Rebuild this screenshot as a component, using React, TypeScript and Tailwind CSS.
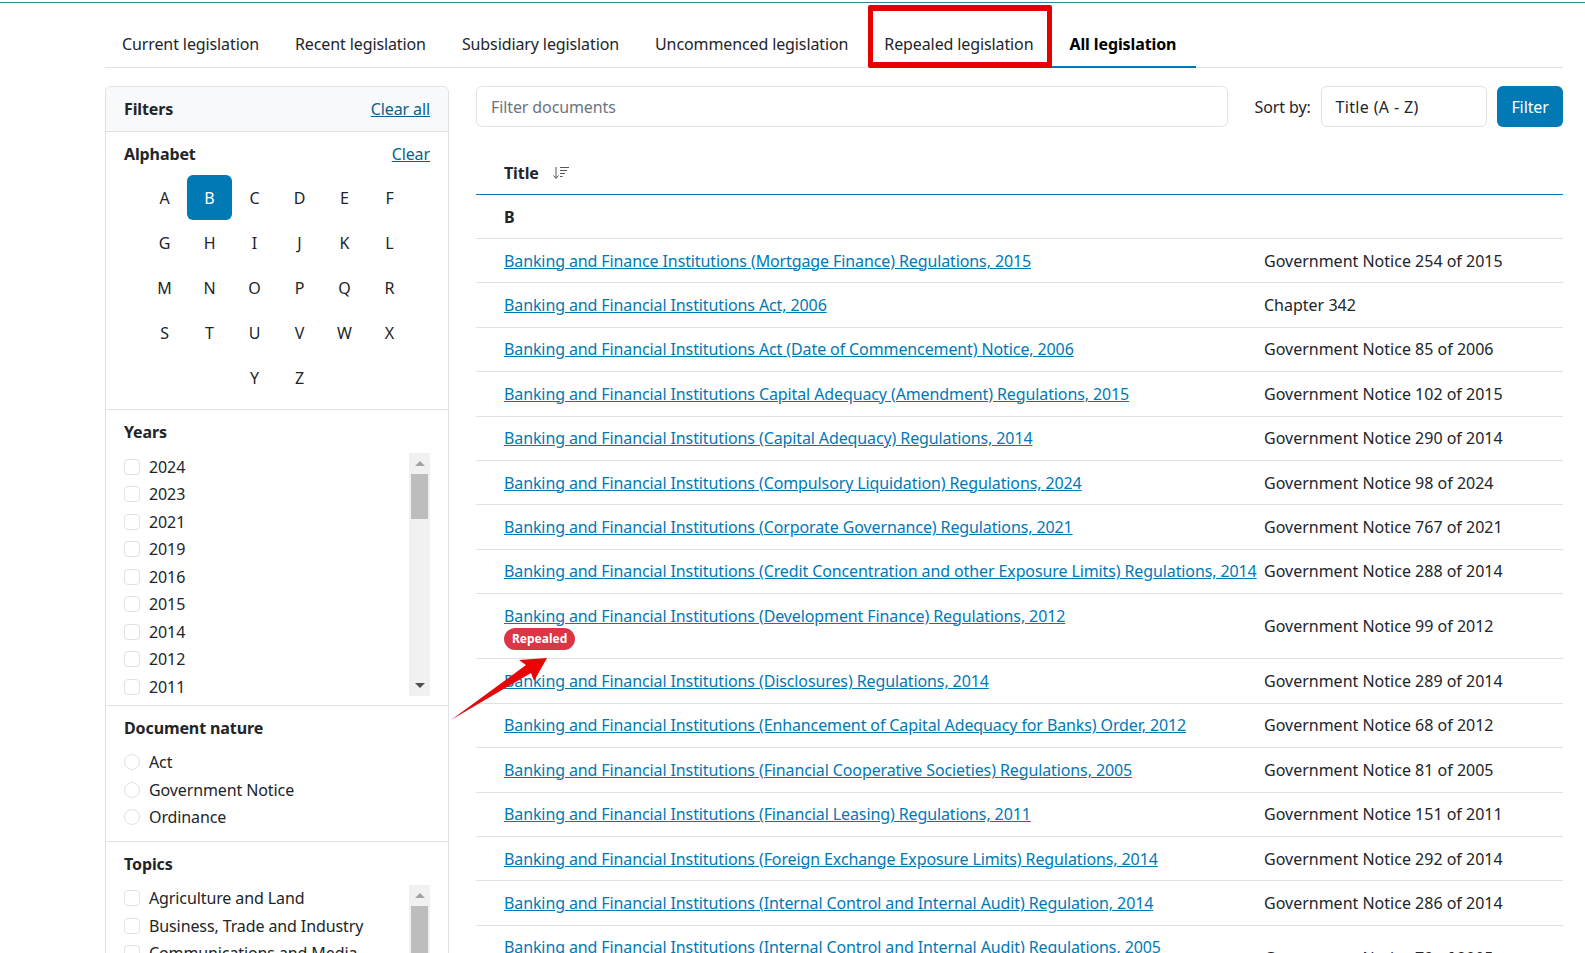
const TABS = ["Current legislation", "Recent legislation", "Subsidiary legislation", "Uncommenced legislation"];
const LETTERS = "ABCDEFGHIJKLMNOPQRSTUVWXYZ".split("");
const YEARS = ["2024", "2023", "2021", "2019", "2016", "2015", "2014", "2012", "2011"];
const NATURE = ["Act", "Government Notice", "Ordinance"];
const TOPICS = ["Agriculture and Land", "Business, Trade and Industry", "Communications and Media"];
const ROWS: [string, string, boolean?][] = [
  ["Banking and Finance Institutions (Mortgage Finance) Regulations, 2015", "Government Notice 254 of 2015"],
  ["Banking and Financial Institutions Act, 2006", "Chapter 342"],
  ["Banking and Financial Institutions Act (Date of Commencement) Notice, 2006", "Government Notice 85 of 2006"],
  ["Banking and Financial Institutions Capital Adequacy (Amendment) Regulations, 2015", "Government Notice 102 of 2015"],
  ["Banking and Financial Institutions (Capital Adequacy) Regulations, 2014", "Government Notice 290 of 2014"],
  ["Banking and Financial Institutions (Compulsory Liquidation) Regulations, 2024", "Government Notice 98 of 2024"],
  ["Banking and Financial Institutions (Corporate Governance) Regulations, 2021", "Government Notice 767 of 2021"],
  ["Banking and Financial Institutions (Credit Concentration and other Exposure Limits) Regulations, 2014", "Government Notice 288 of 2014"],
  ["Banking and Financial Institutions (Development Finance) Regulations, 2012", "Government Notice 99 of 2012", true],
  ["Banking and Financial Institutions (Disclosures) Regulations, 2014", "Government Notice 289 of 2014"],
  ["Banking and Financial Institutions (Enhancement of Capital Adequacy for Banks) Order, 2012", "Government Notice 68 of 2012"],
  ["Banking and Financial Institutions (Financial Cooperative Societies) Regulations, 2005", "Government Notice 81 of 2005"],
  ["Banking and Financial Institutions (Financial Leasing) Regulations, 2011", "Government Notice 151 of 2011"],
  ["Banking and Financial Institutions (Foreign Exchange Exposure Limits) Regulations, 2014", "Government Notice 292 of 2014"],
  ["Banking and Financial Institutions (Internal Control and Internal Audit) Regulation, 2014", "Government Notice 286 of 2014"],
  ["Banking and Financial Institutions (Internal Control and Internal Audit) Regulations, 2005", "Government Notice 79 of 2005", true],
];

function FakeScrollbar({ thumbHeight }: { thumbHeight: string }) {
  return (
    <div className="flex h-full w-[21px] shrink-0 flex-col items-center bg-[#f1f1f1]">
      <div className="flex h-[21px] w-full shrink-0 items-center justify-center">
        <div className="h-0 w-0 border-x-[5px] border-b-[5px] border-x-transparent border-b-[#a3a3a3]" />
      </div>
      <div className={`w-[17px] shrink-0 bg-[#bdbdbd] ${thumbHeight}`} />
      <div className="mt-auto flex h-[21px] w-full shrink-0 items-center justify-center">
        <div className="h-0 w-0 border-x-[5px] border-t-[5px] border-x-transparent border-t-[#505050]" />
      </div>
    </div>
  );
}

function Option({ label, round }: { label: string; round?: boolean }) {
  return (
    <div className="flex h-[27.5px] items-center whitespace-nowrap">
      <span className={`mr-[9px] h-4 w-4 shrink-0 border border-[#dee2e6] bg-white ${round ? "rounded-full" : "rounded-[4px]"}`} />
      <span>{label}</span>
    </div>
  );
}

export default function App() {
  return (
    <div className="relative h-[953px] overflow-hidden bg-white text-[16px] leading-6 tracking-[-0.11px] text-[#212529] [font-family:'Noto_Sans','Open_Sans',sans-serif]">
      <div className="mt-[2px] h-px bg-[#3a8a92]" />
      <div className="pl-[105px] pr-[22px]">
        <div className="flex h-[65px] items-end border-b border-[#dee2e6]">
          {TABS.map((t) => (
            <div key={t} className="flex h-[46px] items-center whitespace-nowrap px-[18px] first:pl-[17px]">{t}</div>
          ))}
          <div className="relative flex h-[46px] items-center whitespace-nowrap px-[18px]">
            Repealed legislation
            <div className="absolute -top-[16px] -bottom-[1px] left-[2px] -right-[1px] rounded-[2px] border-x-[5px] border-y-[6px] border-[#e60000]" />
          </div>
          <div className="-mb-px flex h-[47px] items-center whitespace-nowrap border-b-2 border-[#0179b5] pl-[18px] pr-[20px] font-bold text-black">All legislation</div>
        </div>

        <div className="mt-[18px] flex items-start gap-[27px]">
          <aside className="w-[344px] shrink-0 rounded-t-[6px] border border-[#dee2e6]">
            <div className="flex h-[45px] items-center justify-between rounded-t-[6px] border-b border-[#dee2e6] bg-[#f8f9fa] px-[18px]">
              <span className="font-bold">Filters</span>
              <a className="text-[#0b5f8a] underline">Clear all</a>
            </div>
            <div className="h-[278px] border-b border-[#dee2e6] px-[18px] pt-[10px]">
              <div className="flex h-6 items-center justify-between">
                <span className="font-bold">Alphabet</span>
                <a className="text-[#0b5f8a] underline">Clear</a>
              </div>
              <div className="mt-[9px] flex flex-wrap justify-center px-[18px]">
                {LETTERS.map((l) => (
                  <div key={l} className={`flex h-[45px] w-[45px] items-center justify-center rounded-[6px] ${l === "B" ? "bg-[#0179b5] text-white" : ""}`}>{l}</div>
                ))}
              </div>
            </div>
            <div className="h-[296px] border-b border-[#dee2e6] px-[18px] pt-[10px]">
              <div className="h-6 font-bold">Years</div>
              <div className="mt-[9px] flex h-[243px] justify-between">
                <div>{YEARS.map((y) => <Option key={y} label={y} />)}</div>
                <FakeScrollbar thumbHeight="h-[45px]" />
              </div>
            </div>
            <div className="h-[136px] border-b border-[#dee2e6] px-[18px] pt-[10px]">
              <div className="h-6 font-bold">Document nature</div>
              <div className="mt-[8.5px]">{NATURE.map((n) => <Option key={n} label={n} round />)}</div>
            </div>
            <div className="h-[200px] px-[18px] pt-[10px]">
              <div className="h-6 font-bold">Topics</div>
              <div className="mt-[8.5px] flex h-[150px] justify-between">
                <div>{TOPICS.map((t) => <Option key={t} label={t} />)}</div>
                <FakeScrollbar thumbHeight="h-[120px]" />
              </div>
            </div>
          </aside>

          <main className="min-w-0 flex-1">
            <div className="flex h-[41px] items-stretch">
              <div className="flex w-[753px] items-center rounded-[6px] border border-[#dee2e6] pl-[14px] text-[#6c757d]">Filter documents</div>
              <div className="ml-[27px] flex w-[67px] items-center whitespace-nowrap">Sort by:</div>
              <div className="flex w-[166px] items-center rounded-[6px] border border-[#dee2e6] pl-[13px] tracking-[0.35px]">Title (A - Z)</div>
              <div className="ml-[10px] flex w-[66px] items-center justify-center rounded-[6px] bg-[#0179b5] text-white">Filter</div>
            </div>

            <div className="mt-[27px] flex h-[41px] items-center border-b border-[#0179b5] pb-[2px] pl-[28px] font-bold">
              Title
              <svg className="ml-[13px]" width="18" height="14" viewBox="0 0 18 14" fill="none" stroke="#555" strokeWidth="1">
                <path d="M4 1v11M1.5 9.5 4 12.5l2.5-3M8 1.5h9M8 4.5h7M8 7.5h5M8 10.5h2.5" />
              </svg>
            </div>
            <div className="flex h-[44px] items-center border-b border-[#dee2e6] pl-[28px] font-bold">B</div>
            {ROWS.map(([title, ref, badge]) => (
              <div key={title} className="flex items-center border-b border-[#dee2e6] py-[9.7px]">
                <div className="w-[788px] shrink-0 whitespace-nowrap pl-[28px]">
                  <a className="text-[#0179b5] underline">{title}</a>
                  {badge && (
                    <div className="flex h-[21px]">
                      <span className="flex h-[22px] items-center rounded-full bg-[#dc3545] px-2 text-[12px] font-bold tracking-normal text-white">Repealed</span>
                    </div>
                  )}
                </div>
                <div className="whitespace-nowrap tracking-[0px]">{ref}</div>
              </div>
            ))}
          </main>
        </div>
      </div>

      <svg className="pointer-events-none absolute left-[445px] top-[650px]" width="110" height="75" viewBox="445 650 110 75">
        <defs>
          <linearGradient id="arrowRed" x1="0" y1="1" x2="1" y2="0">
            <stop offset="0" stopColor="#d8101c" />
            <stop offset="1" stopColor="#f00000" />
          </linearGradient>
        </defs>
        <polygon points="451,720 526,665 519,660 547,658 534,681 531,673" fill="url(#arrowRed)" />
      </svg>
    </div>
  );
}
